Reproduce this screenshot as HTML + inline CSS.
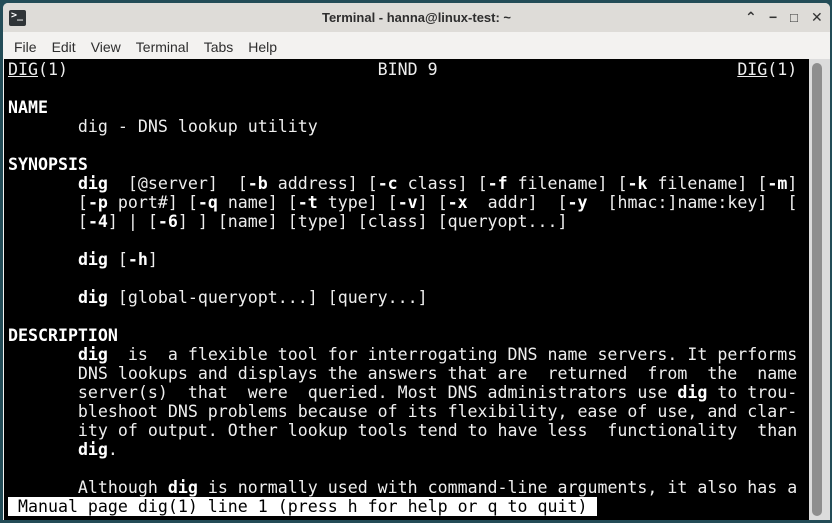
<!DOCTYPE html>
<html><head><meta charset="utf-8"><style>
*{margin:0;padding:0;box-sizing:border-box}
body{width:832px;height:523px;background:#234c57;position:relative;overflow:hidden;font-family:"Liberation Sans","DejaVu Sans",sans-serif}
.win{position:absolute;left:3px;top:3px;width:827px;height:517px;background:#f3f2f0;border-radius:5px 5px 0 0;overflow:hidden}
.title{height:29px;background:#dedcd8;position:relative;font-size:13px;font-weight:bold;color:#2e2e2e;text-align:center;line-height:29px}
.icon{position:absolute;left:6px;top:7px;width:17px;height:16px;background:#2f3437;border-radius:2px;color:#fff;font:bold 10px "DejaVu Sans Mono",monospace;line-height:12px;text-align:left;padding-left:2px}
.ctl{position:absolute;top:0;font-size:14px;color:#333}
.menu{height:27px;font-size:14px;color:#2e2e2e;line-height:30px;padding-left:11px}
.menu span{margin-right:15px}
.term{position:absolute;left:1px;top:56px;width:805px;height:461px;background:#000}
pre{position:absolute;left:4px;top:1px;font-family:"DejaVu Sans Mono",monospace;font-size:16.6px;line-height:19px;color:#eee;letter-spacing:0}
b{color:#fff}
u{text-decoration:underline}
.status{background:#fff;color:#000}
.track{position:absolute;left:806px;top:56px;width:21px;height:461px;background:#dcdcdc}
.thumb{position:absolute;left:3px;top:4px;width:10px;height:453px;background:#8e8e8e;border-radius:5px}
</style></head><body>
<div class="win">
<div class="title"><div class="icon">&gt;_</div>Terminal - hanna@linux-test: ~
<span class="ctl" style="left:742px">&#8963;</span><span class="ctl" style="left:766px">&#8722;</span><span class="ctl" style="left:787px;font-size:13px">&#9633;</span><span class="ctl" style="left:808px">&#10005;</span></div>
<div class="menu"><span>File</span><span>Edit</span><span>View</span><span>Terminal</span><span>Tabs</span><span>Help</span></div>
<div class="term"><pre><u>DIG</u>(1)                               BIND 9                              <u>DIG</u>(1)

<b>NAME</b>
       dig - DNS lookup utility

<b>SYNOPSIS</b>
       <b>dig</b>  [@server]  [<b>-b</b> address] [<b>-c</b> class] [<b>-f</b> filename] [<b>-k</b> filename] [<b>-m</b>]
       [<b>-p</b> port#] [<b>-q</b> name] [<b>-t</b> type] [<b>-v</b>] [<b>-x</b>  addr]  [<b>-y</b>  [hmac:]name:key]  [
       [<b>-4</b>] | [<b>-6</b>] ] [name] [type] [class] [queryopt...]

       <b>dig</b> [<b>-h</b>]

       <b>dig</b> [global-queryopt...] [query...]

<b>DESCRIPTION</b>
       <b>dig</b>  is  a flexible tool for interrogating DNS name servers. It performs
       DNS lookups and displays the answers that are  returned  from  the  name
       server(s)  that  were  queried. Most DNS administrators use <b>dig</b> to trou-
       bleshoot DNS problems because of its flexibility, ease of use, and clar-
       ity of output. Other lookup tools tend to have less  functionality  than
       <b>dig</b>.

       Although <b>dig</b> is normally used with command-line arguments, it also has a
<span class="status"> Manual page dig(1) line 1 (press h for help or q to quit) </span></pre></div>
<div class="track"><div class="thumb"></div></div>
</div>
</body></html>
